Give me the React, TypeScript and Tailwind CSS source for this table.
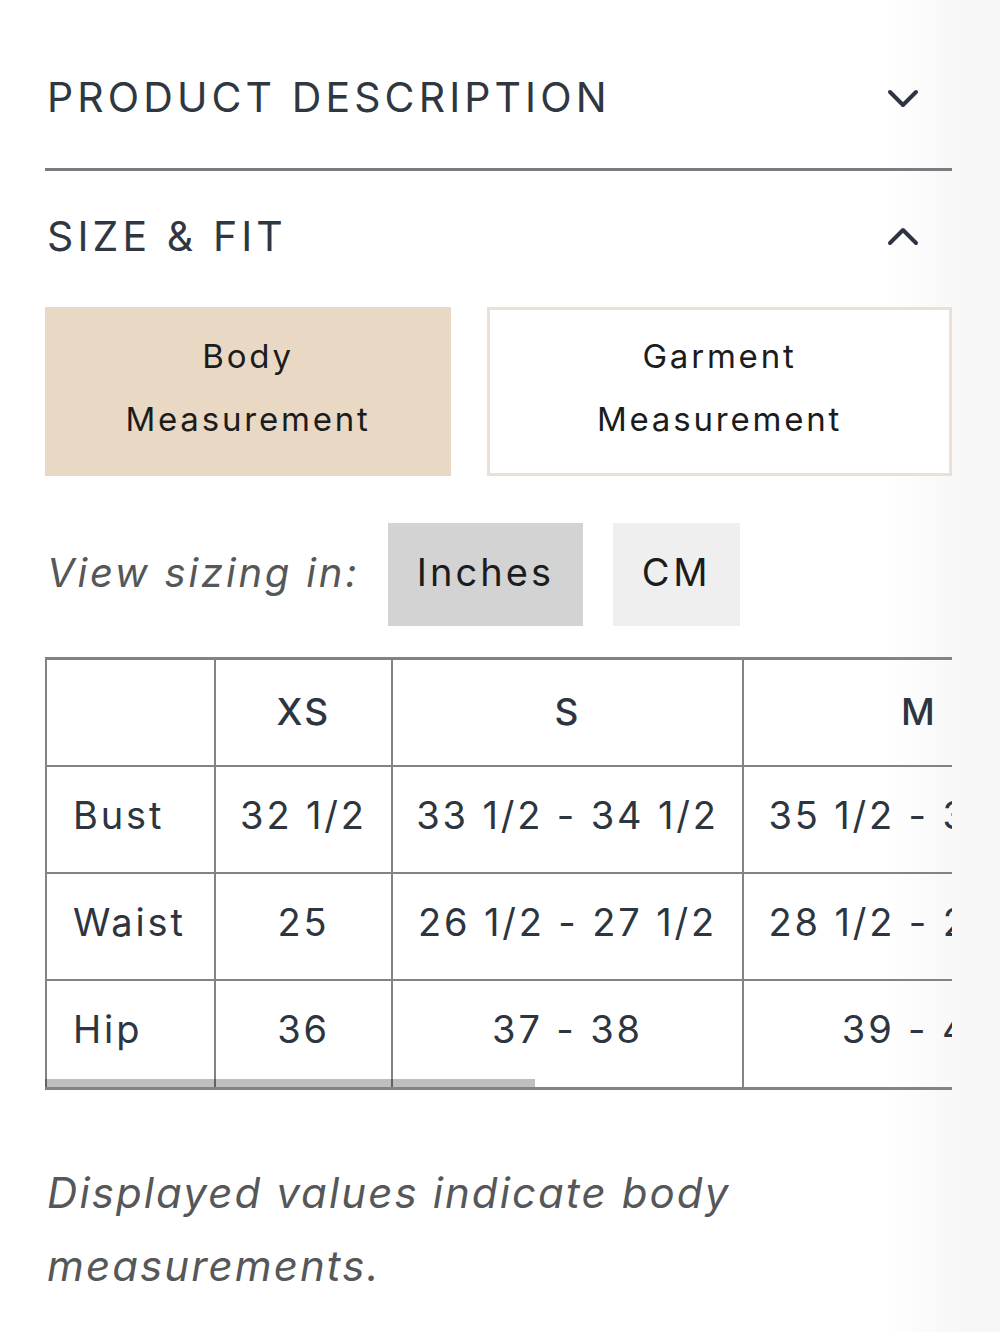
import React from "react";

const font = { fontFamily: "Inter, Lato, 'Noto Sans', sans-serif" };

function Chevron({ up }: { up?: boolean }) {
  return (
    <svg width="32" height="20" viewBox="0 0 32 20" fill="none">
      {up ? (
        <polyline points="3,17 16,4 29,17" stroke="#2c3540" strokeWidth="4" strokeLinecap="round" strokeLinejoin="round" />
      ) : (
        <polyline points="3,3 16,16 29,3" stroke="#2c3540" strokeWidth="4" strokeLinecap="round" strokeLinejoin="round" />
      )}
    </svg>
  );
}

const sizes = ["XS", "S", "M", "L", "XL"];
const widths = [169, 177, 351, 352, 352, 300];
const rows: { label: string; values: string[] }[] = [
  { label: "Bust", values: ["32 1/2", "33 1/2 - 34 1/2", "35 1/2 - 36 1/2", "37 1/2 - 38 1/2", "40"] },
  { label: "Waist", values: ["25", "26 1/2 - 27 1/2", "28 1/2 - 29 1/2", "30 1/2 - 31 1/2", "33"] },
  { label: "Hip", values: ["36", "37 - 38", "39 - 40", "41 - 42", "44"] },
];

export default function App() {
  return (
    <div
      className="w-[1000px] min-h-[1332px] bg-[linear-gradient(to_right,#ffffff_0px,#ffffff_885px,#f7f7f7_960px,#f7f7f7_1000px)]"
      style={font}
    >
      <div className="w-[952px] pl-[45px]">
        {/* Product description header */}
        <div className="h-[168px] flex items-start justify-between pt-[72px] pr-[33px]">
          <h2 className="text-[41px] leading-[50px] tracking-[0.1em] text-[#2f3741] font-normal pl-[2px]">
            PRODUCT DESCRIPTION
          </h2>
          <div className="pt-[17px]">
            <Chevron />
          </div>
        </div>
        <div className="h-[3px] bg-[#797c80]" />

        {/* Size & fit header */}
        <div className="h-[136px] flex items-start justify-between pt-[40px] pr-[33px]">
          <h2 className="text-[41px] leading-[50px] tracking-[0.1em] text-[#2f3741] font-normal pl-[2px]">
            SIZE &amp; FIT
          </h2>
          <div className="pt-[15px]">
            <Chevron up />
          </div>
        </div>

        {/* Measurement toggle */}
        <div className="flex gap-[36px] h-[169px]">
          <button className="w-[406px] h-full bg-[#e8d8c4] text-[#1c1c1c] text-[33px] leading-[63px] tracking-[0.085em] flex flex-col items-center justify-center pb-[8px]">
            <span>Body</span>
            <span>Measurement</span>
          </button>
          <button className="flex-1 h-full bg-white border-[3px] border-[#ebe1d3] text-[#1c1c1c] text-[33px] leading-[63px] tracking-[0.085em] flex flex-col items-center justify-center pb-[8px]">
            <span>Garment</span>
            <span>Measurement</span>
          </button>
        </div>

        {/* Unit toggle */}
        <div className="flex items-center mt-[47px] h-[103px]">
          <span className="italic text-[40px] text-[#555759] tracking-[0.07em] pl-[2px] w-[343px] pb-[4px]">View sizing in:</span>
          <button className="w-[195px] h-full bg-[#d3d3d3] text-[38px] text-[#1c1c1c] tracking-[0.08em] pb-[4px]">Inches</button>
          <button className="ml-[30px] w-[127px] h-full bg-[#efefef] text-[38px] text-[#1c1c1c] tracking-[0.1em] pb-[4px]">CM</button>
        </div>

        {/* Table */}
        <div className="relative mt-[31px] w-[907px] overflow-hidden border-b-[3px] border-[#838383]">
          <table className="table-fixed border-collapse w-[1701px] text-[#2c3540]">
            <colgroup>
              {widths.map((w, i) => (
                <col key={i} style={{ width: w }} />
              ))}
            </colgroup>
            <thead>
              <tr className="h-[107px]">
                <th className="border-[2px] border-[#838383] border-t-[3px]" />
                {sizes.map((s) => (
                  <th key={s} className="border-[2px] border-[#838383] border-t-[3px] text-[37px] font-medium tracking-[0.06em] text-center pb-[2px]">
                    {s}
                  </th>
                ))}
              </tr>
            </thead>
            <tbody>
              {rows.map((r, ri) => (
                <tr key={r.label} className="h-[107px]">
                  <td className={`border-[2px] border-[#838383] text-[38px] tracking-[0.075em] pl-[26px] text-left pb-[8px] ${ri === rows.length - 1 ? "border-b-0" : ""}`}>
                    {r.label}
                  </td>
                  {r.values.map((v, i) => (
                    <td key={i} className={`border-[2px] border-[#838383] text-[38px] tracking-[0.075em] text-center whitespace-nowrap pb-[8px] ${ri === rows.length - 1 ? "border-b-0" : ""}`}>
                      {v}
                    </td>
                  ))}
                </tr>
              ))}
            </tbody>
          </table>
          <div className="absolute left-0 bottom-0 w-[490px] h-[8px] bg-black/25" />
        </div>

        {/* Footnote */}
        <p className="mt-[66px] italic text-[42px] leading-[73px] text-[#555759] tracking-[0.05em] pl-[2px] w-[760px]">
          Displayed values indicate body measurements.
        </p>
      </div>
    </div>
  );
}
